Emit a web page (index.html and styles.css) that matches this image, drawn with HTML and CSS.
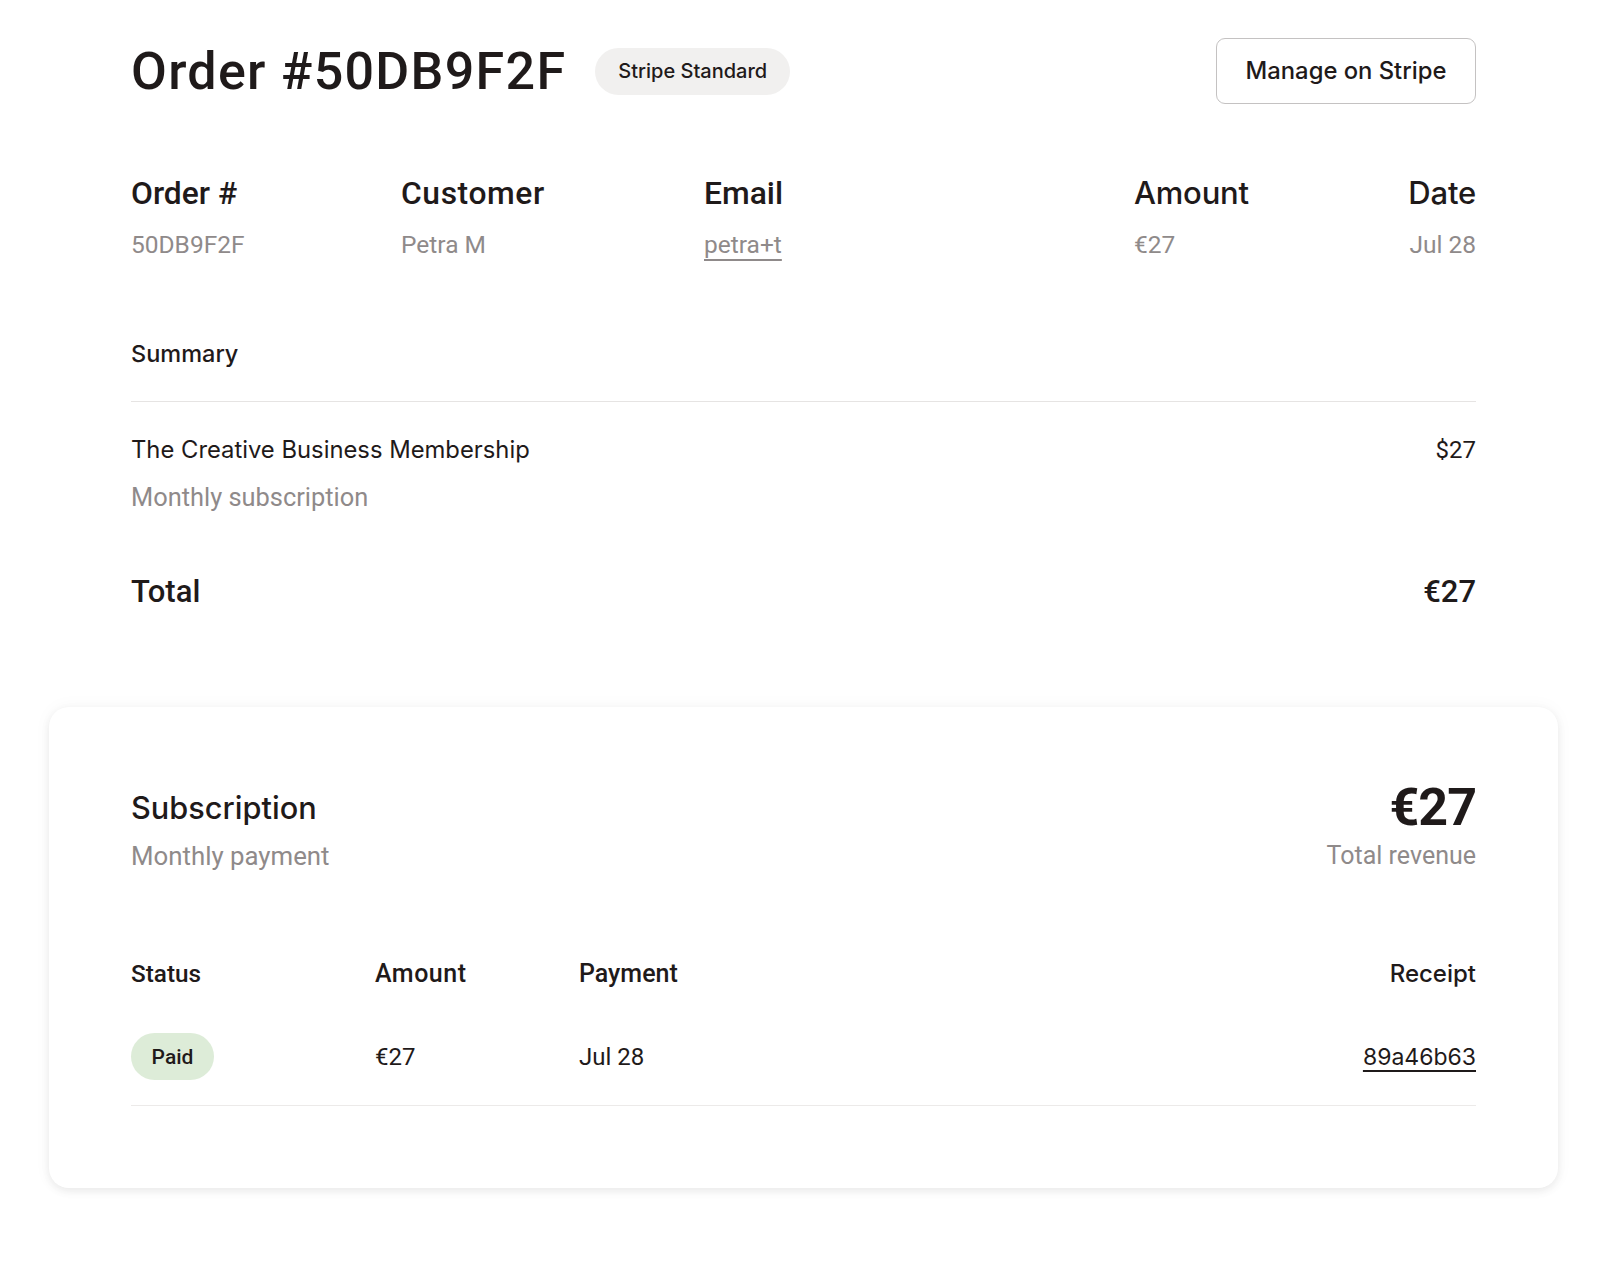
FILE: index.html
```html
<!DOCTYPE html>
<html lang="en">
<head>
<meta charset="utf-8">
<title>Order #50DB9F2F</title>
<link rel="stylesheet" href="styles.css">
</head>
<body>
<main class="page">
  <section class="order">
    <header class="order-head">
      <div class="title-group">
        <h1 class="title">Order #50DB9F2F</h1>
        <span class="tag">Stripe Standard</span>
      </div>
      <a class="btn-outline" href="#">Manage on Stripe</a>
    </header>

    <div class="meta">
      <div class="meta-label">Order #</div>
      <div class="meta-label">Customer</div>
      <div class="meta-label">Email</div>
      <div class="meta-label wide">Amount</div>
      <div class="meta-label wide right">Date</div>

      <div class="meta-value">50DB9F2F</div>
      <div class="meta-value">Petra M</div>
      <div class="meta-value"><a class="email-link" href="#">petra+t</a></div>
      <div class="meta-value">€27</div>
      <div class="meta-value right">Jul 28</div>
    </div>

    <h2 class="summary-title">Summary</h2>
    <div class="line-item">
      <div class="line-main">
        <div class="line-name">The Creative Business Membership</div>
        <div class="line-price">$27</div>
      </div>
      <div class="line-sub">Monthly subscription</div>
    </div>
    <div class="total">
      <span>Total</span>
      <span>€27</span>
    </div>
  </section>

  <section class="card">
    <div class="card-head">
      <div class="card-col">
        <h2 class="card-title">Subscription</h2>
        <div class="muted">Monthly payment</div>
      </div>
      <div class="card-col right">
        <div class="revenue">€27</div>
        <div class="muted">Total revenue</div>
      </div>
    </div>

    <div class="payments">
      <div class="th">Status</div>
      <div class="th">Amount</div>
      <div class="th">Payment</div>
      <div class="th wide right">Receipt</div>

      <div class="td"><span class="status-paid">Paid</span></div>
      <div class="td">€27</div>
      <div class="td">Jul 28</div>
      <div class="td right"><a class="receipt-link" href="#">89a46b63</a></div>
    </div>
  </section>
</main>
</body>
</html>
```

FILE: styles.css
```css
* {
  box-sizing: border-box;
}

body {
  margin: 0;
  background: #ffffff;
  color: #1f1a1a;
  font-family: Roboto, "Liberation Sans", Arial, sans-serif;
}

h1, h2 {
  margin: 0;
  font-weight: inherit;
}

a {
  color: inherit;
}

.page {
  width: 1509px;
  margin-left: 49px;
  padding-top: 38px;
  padding-bottom: 77px;
}

.order {
  padding: 0 82px;
}

/* heading row */
.order-head {
  display: flex;
  align-items: center;
  justify-content: space-between;
  height: 66px;
}

.title-group {
  display: flex;
  align-items: center;
  gap: 29px;
}

.title {
  font-family: Roboto, "Liberation Sans", sans-serif;
  font-size: 52px;
  font-weight: 500;
  letter-spacing: 1.3px;
  line-height: 60px;
  margin-top: 2px;
}

.tag {
  display: inline-flex;
  align-items: center;
  height: 47px;
  padding: 0 23px;
  border-radius: 24px;
  background: #f1f0ef;
  font-family: Inter, sans-serif;
  font-size: 20px;
  font-weight: 500;
}

.btn-outline {
  display: inline-flex;
  align-items: center;
  justify-content: center;
  width: 260px;
  height: 66px;
  border: 1.5px solid #c4c2c2;
  border-radius: 9px;
  font-family: Inter, sans-serif;
  font-size: 23.8px;
  font-weight: 500;
  text-decoration: none;
  padding-bottom: 2px;
}

/* order facts */
.meta {
  display: grid;
  grid-template-columns: 270px 303px 430px 1fr auto;
  margin-top: 69px;
  row-gap: 16px;
}

.meta-label {
  font-size: 31.8px;
  font-weight: 500;
  line-height: 40px;
}

.meta-label:nth-child(2) {
  letter-spacing: 0.6px;
}

.meta-label.wide {
  font-family: Inter, sans-serif;
  font-size: 31px;
  letter-spacing: -0.2px;
}

.meta-value {
  font-size: 24.5px;
  line-height: 32px;
  color: #8f8a8a;
}

.right {
  text-align: right;
}

.email-link {
  color: #8f8a8a;
  text-decoration: underline;
  text-decoration-thickness: 2px;
  text-underline-offset: 6px;
}

/* summary */
.summary-title {
  margin-top: 77px;
  padding-bottom: 31px;
  border-bottom: 1px solid #e6e4e3;
  font-family: Inter, sans-serif;
  font-size: 23.5px;
  font-weight: 500;
  line-height: 32px;
}

.line-item {
  padding-top: 32px;
}

.line-main {
  display: flex;
  justify-content: space-between;
  line-height: 32px;
}

.line-name {
  font-family: Inter, sans-serif;
  font-size: 23.8px;
}

.line-price {
  font-size: 24px;
}

.line-sub {
  margin-top: 15px;
  font-size: 25.4px;
  line-height: 32px;
  color: #8f8a8a;
}

.total {
  display: flex;
  justify-content: space-between;
  margin-top: 59px;
  font-size: 31px;
  font-weight: 500;
  line-height: 40px;
}

/* subscription card */
.card {
  margin-top: 95px;
  padding: 81px 82px 82px;
  border-radius: 20px;
  background: #ffffff;
  box-shadow: 0 3px 8px rgba(0, 0, 0, 0.07), 0 0 18px rgba(0, 0, 0, 0.04);
}

.card-head {
  display: flex;
  justify-content: space-between;
}

.card-col {
  display: flex;
  flex-direction: column;
  gap: 12px;
}

.card-col.right {
  align-items: flex-end;
}

.card-title {
  font-family: Inter, sans-serif;
  font-size: 30.7px;
  font-weight: 500;
  line-height: 40px;
}

.revenue {
  font-size: 52px;
  font-weight: 700;
  letter-spacing: -1px;
  line-height: 40px;
}

.muted {
  font-size: 25px;
  line-height: 32px;
  color: #8f8a8a;
}

.card-col:first-child .muted {
  font-size: 25.8px;
}

/* payments table */
.payments {
  display: grid;
  grid-template-columns: 244px 204px 1fr auto;
  margin-top: 86px;
}

.th {
  font-size: 25px;
  font-weight: 500;
  line-height: 32px;
  padding-bottom: 18px;
}

.th:first-child {
  font-size: 24.3px;
}

.th:nth-child(2) {
  letter-spacing: 0.5px;
}

.th.wide {
  font-family: Inter, sans-serif;
  font-size: 24px;
}

.td {
  display: flex;
  align-items: center;
  height: 98px;
  font-size: 24px;
  border-bottom: 1px solid #eceae9;
}

.td.right {
  justify-content: flex-end;
}

.status-paid {
  display: inline-flex;
  align-items: center;
  justify-content: center;
  width: 83px;
  height: 47px;
  border-radius: 24px;
  background: #ddecd8;
  font-size: 21px;
  font-weight: 500;
}

.receipt-link {
  font-family: Inter, sans-serif;
  font-size: 23px;
  text-decoration: underline;
  text-decoration-thickness: 1.5px;
  text-underline-offset: 5px;
}
```
